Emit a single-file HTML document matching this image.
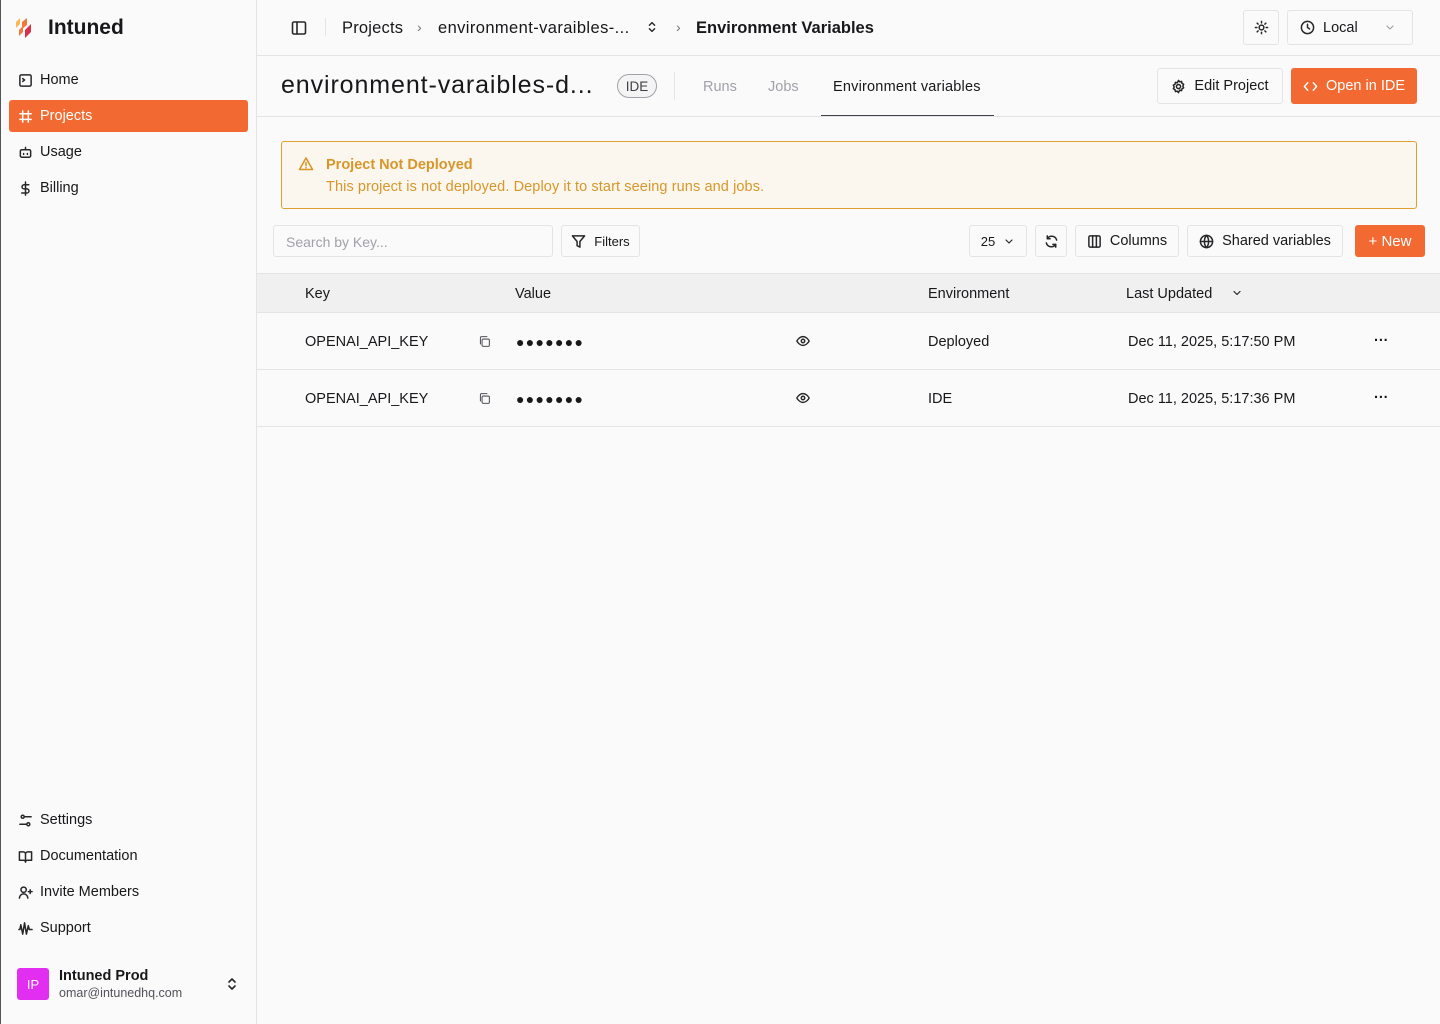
<!DOCTYPE html>
<html><head><meta charset="utf-8"><style>
*{box-sizing:border-box;margin:0;padding:0}
body{width:1440px;height:1024px;background:#fafafa;font-family:"Liberation Sans",sans-serif;color:#18181b;position:relative;overflow:hidden;font-size:14px}
.a{position:absolute}
.side{left:0;top:0;width:257px;height:1024px;border-right:1px solid #e4e4e7;border-left:1px solid #555;background:#fafafa}
.nav{position:absolute;left:8px;width:239px;height:32px;display:flex;align-items:center;padding-left:9px;gap:7px;font-size:14.5px;border-radius:3px}
.nav svg{width:15px;height:15px;fill:none;stroke:#27272a;stroke-width:1.6;stroke-linecap:round;stroke-linejoin:round}
.btn{position:absolute;border:1px solid #e4e4e7;background:#fafafa;border-radius:3px;display:flex;align-items:center;justify-content:center;gap:8px;font-size:14.5px}
.btn svg{width:15px;height:15px;fill:none;stroke:#27272a;stroke-width:1.6;stroke-linecap:round;stroke-linejoin:round}
.or{background:#f26a32;border-color:#f26a32;color:#fff}
.or svg{stroke:#fff}
.hl{position:absolute;left:257px;right:0;height:1px;background:#e4e4e7}
.t{position:absolute;font-size:14.5px;white-space:nowrap}
.ic{position:absolute;fill:none;stroke:#27272a;stroke-width:1.6;stroke-linecap:round;stroke-linejoin:round}
</style></head><body>
<div class="a side">
 <svg class="a" style="left:12px;top:16px" width="24" height="24" viewBox="0 0 24 24"><path d="M3 6l4-4v6l-4 4z" fill="#f7b955"/><path d="M9 6l5-4v7l-5 4z" fill="#f07a3a"/><path d="M6 14l4-4v6l-4 4z" fill="#f07a3a"/><path d="M12 14l6-6v8l-6 6z" fill="#d6304a"/></svg>
 <div class="t" style="left:47px;top:16px;font-size:21px;font-weight:bold">Intuned</div>
 <div class="nav" style="top:64px"><svg viewBox="0 0 16 16"><rect x="2" y="2" width="12" height="12" rx="1.5"/><path d="M5 6l2 1.5L5 9"/></svg>Home</div>
 <div class="nav" style="top:100px;background:#f26a32;color:#fff"><svg viewBox="0 0 16 16" style="stroke:#fff"><path d="M5 2v12M11 2v12M2 5h12M2 11h12"/></svg>Projects</div>
 <div class="nav" style="top:136px"><svg viewBox="0 0 16 16"><rect x="2.5" y="5" width="11" height="8" rx="1.5"/><path d="M8 5V2.5M6 9v1M10 9v1"/></svg>Usage</div>
 <div class="nav" style="top:172px"><svg viewBox="0 0 16 16"><path d="M8 1v14M11.5 4H6.5a2.2 2.2 0 000 4.4h3a2.2 2.2 0 010 4.4H4"/></svg>Billing</div>
 <div class="nav" style="top:804px"><svg viewBox="0 0 16 16"><circle cx="5" cy="4" r="1.6"/><circle cx="11" cy="12" r="1.6"/><path d="M7 4h7M2 12h7"/></svg>Settings</div>
 <div class="nav" style="top:840px"><svg viewBox="0 0 16 16"><path d="M1.5 3h4A2.5 2.5 0 018 5.5V14a2 2 0 00-2-2H1.5zM14.5 3h-4A2.5 2.5 0 008 5.5V14a2 2 0 012-2h4.5z"/></svg>Documentation</div>
 <div class="nav" style="top:876px"><svg viewBox="0 0 16 16"><circle cx="6" cy="5" r="2.8"/><path d="M1.5 14a4.5 4.5 0 019 0M13 5v4M11 7h4"/></svg>Invite Members</div>
 <div class="nav" style="top:912px"><svg viewBox="0 0 16 16"><path d="M1 9h1l1-5 2 10 2-12 2 12 2-9 1 4h3"/></svg>Support</div>
 <div class="a" style="left:16px;top:968px;width:32px;height:32px;background:#e12ef0;border-radius:3px;color:#fff;font-size:13px;display:flex;align-items:center;justify-content:center">IP</div>
 <div class="t" style="left:58px;top:968px;font-weight:bold;font-size:14.5px">Intuned Prod</div>
 <div class="t" style="left:58px;top:986px;font-size:12.5px;color:#52525b">omar@intunedhq.com</div>
 <svg class="ic" style="left:223px;top:976px" width="16" height="16" viewBox="0 0 16 16"><path d="M5 6l3-3 3 3M5 10l3 3 3-3"/></svg>
</div>
<!-- top bar -->
<svg class="ic" style="left:291px;top:20px" width="16" height="16" viewBox="0 0 16 16"><rect x="1.5" y="2" width="13" height="12" rx="1.5"/><path d="M6 2v12"/></svg>
<div class="a" style="left:325px;top:18px;width:1px;height:18px;background:#e4e4e7"></div>
<div class="t" style="left:342px;top:19px;font-size:16.5px;letter-spacing:0.2px">Projects</div>
<div class="t" style="left:417px;top:19px;font-size:14px;color:#71717a">›</div>
<div class="t" style="left:438px;top:19px;font-size:16.5px;letter-spacing:0.4px">environment-varaibles-...</div>
<svg class="ic" style="left:645px;top:20px" width="14" height="14" viewBox="0 0 16 16"><path d="M5 6l3-3 3 3M5 10l3 3 3-3"/></svg>
<div class="t" style="left:676px;top:19px;font-size:14px;color:#71717a">›</div>
<div class="t" style="left:696px;top:19px;font-size:16.5px;font-weight:bold">Environment Variables</div>
<div class="btn" style="left:1243px;top:10px;width:36px;height:35px"><svg viewBox="0 0 16 16"><circle cx="8" cy="8" r="2.5"/><path d="M8 1.5v1.5M8 13v1.5M1.5 8H3M13 8h1.5M3.4 3.4l1 1M11.6 11.6l1 1M3.4 12.6l1-1M11.6 4.4l1-1"/></svg></div>
<div class="btn" style="left:1287px;top:10px;width:126px;height:35px;justify-content:flex-start;padding-left:12px"><svg viewBox="0 0 16 16"><circle cx="8" cy="8" r="6.5"/><path d="M8 4.5V8l2.2 1.5"/></svg>Local<svg viewBox="0 0 16 16" style="margin-left:18px;stroke:#a1a1aa;width:12px"><path d="M4 6l4 4 4-4"/></svg></div>
<div class="hl" style="top:55px"></div>
<!-- header -->
<div class="t" style="left:281px;top:71px;font-size:25px;letter-spacing:0.9px">environment-varaibles-d...</div>
<div class="a" style="left:617px;top:74px;width:40px;height:24px;border:1px solid #a1a1aa;border-radius:12px;background:#f4f4f5;font-size:13.5px;display:flex;align-items:center;justify-content:center;color:#3f3f46">IDE</div>
<div class="a" style="left:674px;top:72px;width:1px;height:28px;background:#e4e4e7"></div>
<div class="t" style="left:703px;top:79px;color:#a1a1aa">Runs</div>
<div class="t" style="left:768px;top:79px;color:#a1a1aa">Jobs</div>
<div class="t" style="left:833px;top:79px;letter-spacing:0.2px">Environment variables</div>
<div class="a" style="left:821px;top:115px;width:173px;height:2px;background:#3f3f46"></div>
<div class="btn" style="left:1157px;top:68px;width:126px;height:36px"><svg viewBox="0 0 16 16"><circle cx="8" cy="8" r="2.2"/><path d="M8 1.5l1.3 1.6 2-.5.4 2 1.8 1-.9 1.9.9 1.9-1.8 1-.4 2-2-.5L8 14.5l-1.3-1.6-2 .5-.4-2-1.8-1 .9-1.9-.9-1.9 1.8-1 .4-2 2 .5z"/></svg>Edit Project</div>
<div class="btn or" style="left:1291px;top:68px;width:126px;height:36px"><svg viewBox="0 0 16 16"><path d="M5 4L1.5 8 5 12M11 4l3.5 4L11 12"/></svg>Open in IDE</div>
<div class="hl" style="top:116px"></div>
<!-- alert -->
<div class="a" style="left:281px;top:141px;width:1136px;height:68px;border:1px solid #e0a030;border-radius:3px;background:#fbf7ee"></div>
<svg class="ic" style="left:298px;top:156px;stroke:#d8962a" width="16" height="16" viewBox="0 0 16 16"><path d="M8 2L1.5 13.5h13zM8 6.5v3M8 11.5v.3"/></svg>
<div class="t" style="left:326px;top:157px;color:#d8962a;font-weight:bold">Project Not Deployed</div>
<div class="t" style="left:326px;top:179px;color:#d8962a;letter-spacing:0.1px">This project is not deployed. Deploy it to start seeing runs and jobs.</div>
<!-- toolbar -->
<div class="a" style="left:273px;top:225px;width:280px;height:32px;border:1px solid #e4e4e7;border-radius:3px;padding:8px 12px;color:#a1a1aa;font-size:14px">Search by Key...</div>
<div class="btn" style="left:561px;top:225px;width:79px;height:32px;font-size:13px"><svg viewBox="0 0 16 16"><path d="M1.5 2h13L9.5 8v6l-3-1.5V8z"/></svg>Filters</div>
<div class="btn" style="left:969px;top:225px;width:58px;height:32px;font-size:13px">25<svg viewBox="0 0 16 16" style="width:12px"><path d="M4 6l4 4 4-4"/></svg></div>
<div class="btn" style="left:1035px;top:225px;width:32px;height:32px"><svg viewBox="0 0 16 16"><path d="M13.5 6.5A5.5 5.5 0 003.5 5M2.5 9.5A5.5 5.5 0 0012.5 11M3.5 2v3h3M12.5 14v-3h-3"/></svg></div>
<div class="btn" style="left:1075px;top:225px;width:104px;height:32px"><svg viewBox="0 0 16 16"><rect x="2" y="2" width="12" height="12" rx="1.5"/><path d="M6 2v12M10 2v12"/></svg>Columns</div>
<div class="btn" style="left:1187px;top:225px;width:156px;height:32px"><svg viewBox="0 0 16 16"><circle cx="8" cy="8" r="6.5"/><path d="M1.5 8h13M8 1.5c-3 3.5-3 9.5 0 13M8 1.5c3 3.5 3 9.5 0 13"/></svg>Shared variables</div>
<div class="btn or" style="left:1355px;top:225px;width:70px;height:32px;font-size:15px">+ New</div>
<!-- table -->
<div class="a" style="left:257px;top:273px;right:0;height:40px;background:#f0f0f0;border-top:1px solid #e4e4e7;border-bottom:1px solid #e4e4e7"></div>
<div class="t" style="left:305px;top:286px">Key</div>
<div class="t" style="left:515px;top:286px">Value</div>
<div class="t" style="left:928px;top:286px">Environment</div>
<div class="t" style="left:1126px;top:286px">Last Updated</div>
<svg class="ic" style="left:1231px;top:287px" width="12" height="12" viewBox="0 0 16 16"><path d="M4 6l4 4 4-4"/></svg>
<div class="hl" style="top:369px"></div>
<div class="hl" style="top:426px"></div>
<div class="t" style="left:305px;top:334px">OPENAI_API_KEY</div>
<div class="t" style="left:305px;top:391px">OPENAI_API_KEY</div>
<svg class="ic" style="left:478px;top:335px;stroke:#52525b;stroke-width:1.3" width="13" height="13" viewBox="0 0 16 16"><rect x="5" y="5" width="9" height="9" rx="1.5"/><path d="M3 11V3.5A1.5 1.5 0 014.5 2H11"/></svg>
<svg class="ic" style="left:478px;top:392px;stroke:#52525b;stroke-width:1.3" width="13" height="13" viewBox="0 0 16 16"><rect x="5" y="5" width="9" height="9" rx="1.5"/><path d="M3 11V3.5A1.5 1.5 0 014.5 2H11"/></svg>
<div class="t" style="left:516px;top:334px;font-size:14px;letter-spacing:1.3px">●●●●●●●</div>
<div class="t" style="left:516px;top:391px;font-size:14px;letter-spacing:1.3px">●●●●●●●</div>
<svg class="ic" style="left:795px;top:334px" width="16" height="14" viewBox="0 0 16 16"><path d="M1 8s2.5-5 7-5 7 5 7 5-2.5 5-7 5-7-5-7-5z"/><circle cx="8" cy="8" r="2"/></svg>
<svg class="ic" style="left:795px;top:391px" width="16" height="14" viewBox="0 0 16 16"><path d="M1 8s2.5-5 7-5 7 5 7 5-2.5 5-7 5-7-5-7-5z"/><circle cx="8" cy="8" r="2"/></svg>
<div class="t" style="left:928px;top:334px">Deployed</div>
<div class="t" style="left:928px;top:391px">IDE</div>
<div class="t" style="left:1128px;top:334px">Dec 11, 2025, 5:17:50 PM</div>
<div class="t" style="left:1128px;top:391px">Dec 11, 2025, 5:17:36 PM</div>
<div class="t" style="left:1374px;top:333px;font-weight:bold">···</div>
<div class="t" style="left:1374px;top:390px;font-weight:bold">···</div>
</body></html>
